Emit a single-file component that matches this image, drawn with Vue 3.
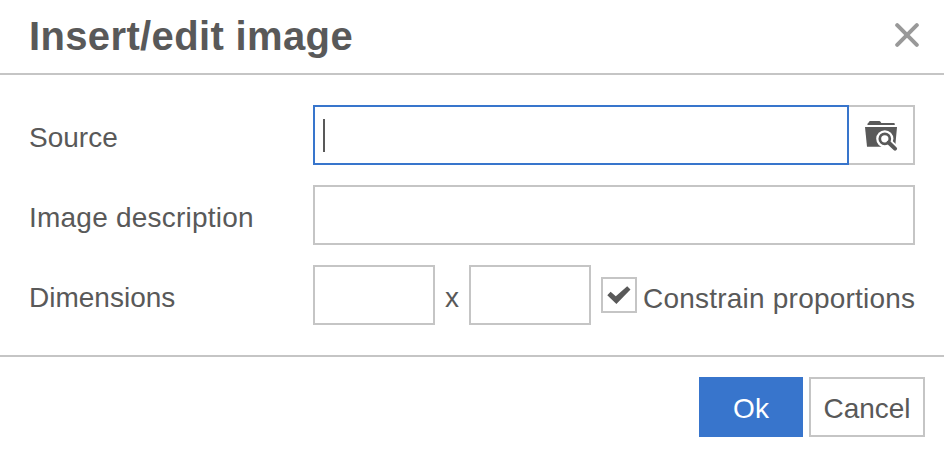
<script setup>
import { ref } from 'vue'

const source = ref('')
const description = ref('')
const width = ref('')
const height = ref('')
const constrain = ref(true)
const focused = ref('source')
const visible = ref(true)

const onClose = () => {
  visible.value = false
}

const onToggle = () => {
  constrain.value = !constrain.value
}
</script>

<template>
  <div
    v-if="visible"
    class="dialog"
  >
    <div class="dialog-head">
      <h1 class="title">Insert/edit image</h1>
      <button
        class="close"
        aria-label="Close"
        @click="onClose"
      >
        <svg width="24" height="24" viewBox="0 0 24 24">
          <path d="M2.2 2.2L21.8 21.8M21.8 2.2L2.2 21.8" fill="none" stroke="#999999" stroke-width="4" stroke-linecap="round" />
        </svg>
      </button>
    </div>
    <div class="dialog-body">
      <div class="row">
        <label for="source">Source</label>
        <div
          class="field"
          :class="{ caret: focused === 'source' && !source }"
        >
          <input
            id="source"
            v-model="source"
            type="text"
            :class="{ focused: focused === 'source' }"
            @focus="focused = ''"
          >
        </div>
        <button
          class="browse"
          aria-label="Browse"
        >
          <svg width="34" height="32" viewBox="-1 -1 34 32">
            <path d="M2.4 5L2.6 3.6Q2.7 3 3.3 3L4.2 1.5Q4.5 1 5.1 1H14.4Q15 1 15.3 1.5L16.3 3H29Q29.6 3 29.7 3.6L29.8 5Z" fill="#595959" />
            <path d="M0 7H32L30.2 26.8H2Z" fill="#595959" />
            <circle cx="19.8" cy="18.8" r="8.6" fill="#ffffff" />
            <path d="M23.5 22.5L32 31" stroke="#ffffff" stroke-width="8" />
            <circle cx="19.8" cy="18.8" r="5" fill="none" stroke="#595959" stroke-width="2.7" />
            <path d="M23.6 22.5L30 28.6" stroke="#595959" stroke-width="4" stroke-linecap="round" />
          </svg>
        </button>
      </div>
      <div class="row">
        <label
          class="wide"
          for="description"
        >Image description</label>
        <div class="field">
          <input
            id="description"
            v-model="description"
            type="text"
          >
        </div>
      </div>
      <div class="row">
        <label for="width">Dimensions</label>
        <div class="dimensions">
          <input
            id="width"
            v-model="width"
            type="text"
          >
          <span class="times">x</span>
          <input
            v-model="height"
            type="text"
            aria-label="Height"
          >
          <div
            class="checkbox"
            role="checkbox"
            :aria-checked="constrain"
            @click="onToggle"
          >
            <span class="box">
              <svg v-show="constrain" width="24" height="20" viewBox="0 0 24 20">
                <path d="M0.3 10.2L3.6 6.8L8.8 11.3L20.2 1.2L23.5 4.5L9.4 18.9Z" fill="#595959" />
              </svg>
            </span>
            <span class="box-label wide">Constrain proportions</span>
          </div>
        </div>
      </div>
    </div>
    <div class="dialog-foot">
      <button
        class="btn primary"
        @click="onClose"
      >
        Ok
      </button>
      <button
        class="btn"
        @click="onClose"
      >
        Cancel
      </button>
    </div>
  </div>
</template>

<style>
body {
  margin: 0;
  background-color: #FFFFFF;
}
</style>

<style scoped>
.dialog {
  width: 944px;
  height: 456px;
  box-sizing: border-box;
  overflow: hidden;
  background-color: #FFFFFF;
  color: #595959;
  font-family: "Liberation Sans", Arial, sans-serif;
  font-size: 28px;
  line-height: 32px;
}
.dialog * {
  box-sizing: border-box;
}
button {
  font: inherit;
  color: inherit;
  background-color: #FFFFFF;
  border: 2px solid #C5C5C5;
  border-radius: 0;
  padding: 0;
  cursor: pointer;
}
input {
  width: 100%;
  height: 60px;
  padding: 0 8px;
  border: 2px solid #C5C5C5;
  border-radius: 0;
  outline: none;
  font: inherit;
  color: inherit;
}
input.focused,
input:focus {
  border-color: #3875CC;
}
.dialog-head {
  display: flex;
  align-items: center;
  justify-content: space-between;
  height: 75px;
  padding: 0 25px 2px 29px;
  border-bottom: 2px solid #C5C5C5;
}
.title {
  margin: 0;
  font-size: 40px;
  font-weight: bold;
  line-height: 46px;
  letter-spacing: 0.36px;
  white-space: nowrap;
}
.close {
  display: flex;
  margin-bottom: 1px;
  border: none;
}
.dialog-body {
  display: flex;
  flex-direction: column;
  gap: 20px;
  padding: 30px 29px;
}
.row {
  display: flex;
  align-items: center;
  height: 60px;
}
.row > label {
  flex: 0 0 284px;
  padding-top: 6px;
  white-space: nowrap;
}
.wide {
  letter-spacing: 0.22px;
}
.field {
  position: relative;
  flex: 1;
}
.field.caret::before {
  content: '';
  position: absolute;
  top: 14px;
  left: 10px;
  width: 2px;
  height: 33px;
  background-color: #595959;
}
.browse {
  display: flex;
  align-items: center;
  justify-content: center;
  width: 66px;
  height: 60px;
  border-left: none;
}
.dimensions {
  display: flex;
  align-items: center;
}
.dimensions input {
  width: 122px;
}
.times {
  width: 34px;
  padding-top: 6px;
  text-align: center;
}
.checkbox {
  display: flex;
  align-items: center;
  margin-left: 10px;
  cursor: pointer;
}
.box {
  display: flex;
  align-items: center;
  justify-content: center;
  width: 36px;
  height: 36px;
  border: 2px solid #C5C5C5;
}
.box-label {
  height: 32px;
  margin-left: 6px;
  padding-top: 4px;
  white-space: nowrap;
}
.dialog-foot {
  display: flex;
  justify-content: flex-end;
  gap: 6px;
  padding: 20px 19px 19px;
  border-top: 2px solid #C5C5C5;
}
.btn {
  width: 116px;
  height: 60px;
  padding-top: 3px;
}
.btn.primary {
  width: 104px;
  color: #FFFFFF;
  background-color: #3875CC;
  border-color: #3875CC;
}
</style>
